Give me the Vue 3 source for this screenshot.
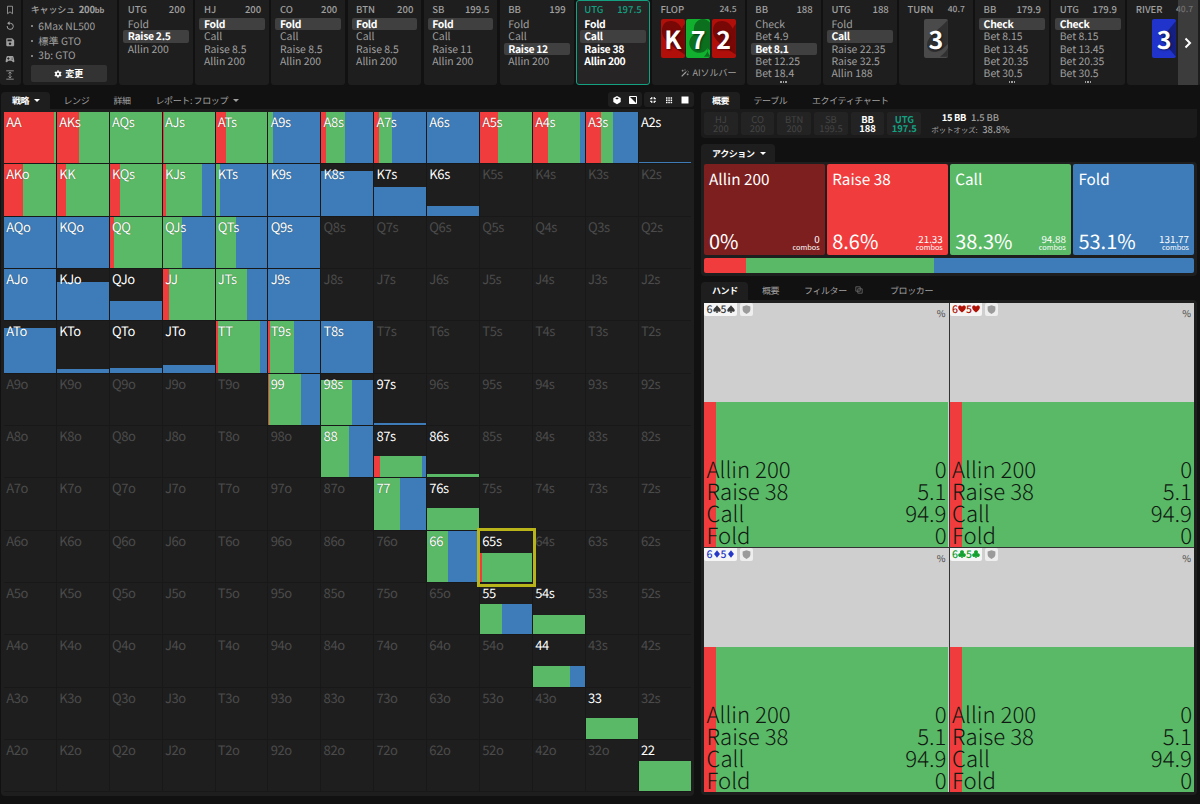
<template>
  <div class="app">

    <!-- Barra superior: historial de la mano -->
    <header class="topbar">
      <nav class="tools">
        <svg viewBox="0 0 12 12"><path d="M3 1.5h6v9L6 8.2 3 10.500z" fill="none" stroke="currentColor" /></svg>
        <svg viewBox="0 0 12 12"><path d="M4 2.700h2.500a3.700 3.700 0 1 1-3.900 3.300" fill="none" stroke="currentColor" stroke-width="1.200" /><path d="M5.500.3v4.800L2.600 2.700z" fill="currentColor" /></svg>
        <svg viewBox="0 0 12 12"><path fill-rule="evenodd" d="M2.500 1.500h6l2.500 2.500v6a1 1 0 0 1-1 1h-7.500a1 1 0 0 1-1-1v-7.500a1 1 0 0 1 1-1zM3 3v2h5V3zM6 6.500a1.500 1.500 0 1 0 .01 0z" fill="currentColor" /></svg>
        <svg viewBox="0 0 12 12"><path fill-rule="evenodd" d="M3 2.500h6c1.200 0 1.500 2 2.200 6 .2 1.500-1 1.800-1.700 1L7.800 8H4.200L2.500 9.500c-.7.800-1.900.5-1.700-1 .7-4 1-6 2.200-6zM3.500 4v1h-1v1h1v1h1V6h1V5h-1V4zM8 4.500v1h1v-1zM8 6v1h1V6z" fill="currentColor" /></svg>
        <svg viewBox="0 0 12 12"><path d="M1.500 1h9M1.500 11h9M6 2.500v7M4 4.300l2-2 2 2M4 7.700l2 2 2-2" fill="none" stroke="currentColor" /></svg>
      </nav>

      <section class="setup">
        <div class="setup-title">キャッシュ <b>200<small>bb</small></b></div>
        <ul>
          <li v-for="s in ajustes" :key="s">{{ s }}</li>
        </ul>
        <button class="btn-change">
          <svg viewBox="0 0 12 12"><circle cx="6" cy="6" r="3" fill="none" stroke="#fff" stroke-width="2.400" /><path d="M6 .5v11M1.200 3.200l9.600 5.600M10.800 3.200L1.200 8.800" stroke="#fff" stroke-width="2" /><circle cx="6" cy="6" r="1.700" fill="#353535" /></svg>
          変更
        </button>
      </section>

      <section v-for="(n, i) in nodos" :key="i" class="node" :class="{ active: n.activo, flop: n.pos === 'FLOP' }">
        <div class="node-head"><span>{{ n.pos }}</span><span :class="{ pot: n.cartas }">{{ n.stack }}</span></div>
        <template v-if="n.cartas">
          <div class="cards">
            <div v-for="c in n.cartas" :key="c.r" class="card" :class="c.palo">
              <svg viewBox="0 0 24 39"><path :d="palosGrandes[c.palo]" /></svg>
              <b>{{ c.r }}</b>
            </div>
          </div>
          <div v-if="n.pos === 'FLOP'" class="solver">
            <svg viewBox="0 0 12 12"><path d="M1 11l6.500-6.500" stroke="currentColor" stroke-width="1.800" /><path d="M8 4l1.500-1.500M2.500 1v3M1 2.500h3M6 .5v2M10 6.500v3M8.500 8h3M11 3.500v1.500" stroke="currentColor" stroke-width="1.100" fill="none" /></svg>
            AIソルバー
          </div>
        </template>
        <div v-else class="node-list">
          <div v-for="(a, j) in n.acciones" :key="a" class="act" :class="{ sel: j === n.sel }">{{ a }}</div>
          <div v-if="n.mas" class="more"><i /><i /><i /></div>
        </div>
      </section>

      <button class="scroll-right">
        <svg viewBox="0 0 10 14"><path d="M2.500 2.500L7 7l-4.500 4.500" fill="none" stroke="#fff" stroke-width="2" /></svg>
      </button>
    </header>

    <main class="content">

      <!-- Matriz de manos -->
      <section class="left">
        <div class="tabs">
          <span class="tab on w-strategy">戦略 <i class="caret" /></span>
          <span class="tab w-range">レンジ</span>
          <span class="tab w-detail">詳細</span>
          <span class="tab w-report">レポート: フロップ <i class="caret" /></span>
          <div class="views">
            <div class="view-group">
              <svg viewBox="0 0 10 10"><path d="M5 1l3.700 2v4L5 9.200 1.300 7V3z" fill="#fff" /><path d="M3.200 3.400L5 4.400l1.800-1L5 2.500z" fill="#1e1e1e" /></svg>
              <svg viewBox="0 0 10 10"><path d="M1.500 1.500h7v7h-7z" fill="none" stroke="#fff" /><path d="M1.500 1.500v7h7z" fill="#fff" /></svg>
            </div>
            <div class="view-group">
              <svg viewBox="0 0 10 10"><path d="M3.800 2v1.800H2M6.200 2v1.800H8M3.800 8V6.200H2M6.200 8V6.200H8" fill="none" stroke="#fff" stroke-width="1.100" /></svg>
              <svg viewBox="0 0 10 10"><path d="M2 3h6.500M2 5.250h6.500M2 7.500h6.500" stroke="#fff" stroke-width="1.500" stroke-dasharray="1.500 .8" /></svg>
              <svg viewBox="0 0 10 10"><path d="M1.500 1.500h7v7h-7z" fill="#fff" /></svg>
            </div>
          </div>
        </div>
        <div class="matrix-panel">
          <div class="matrix">
            <div v-for="c in celdas" :key="c.mano" class="cell" :class="{ empty: !c.barras, selected: c.mano === '65s' }">
              <div v-if="c.barras" class="fill" :style="{ height: c.alto + '%' }">
                <i v-for="(w, k) in c.barras" :key="k" :class="colores[k]" :style="{ width: w + '%' }" />
              </div>
              <span class="label">{{ c.mano }}</span>
            </div>
          </div>
        </div>
      </section>

      <!-- Resumen -->
      <section class="right">
        <div class="tabs">
          <span class="tab on w-sum">概要</span>
          <span class="tab w-table">テーブル</span>
          <span class="tab">エクイティチャート</span>
        </div>
        <div class="players">
          <div v-for="p in jugadores" :key="p.pos" class="player" :class="p.estado">
            <span>{{ p.pos }}</span><span>{{ p.stack }}</span>
          </div>
          <div class="pot-info">
            <div><b>15 BB</b><span>1.5 BB</span></div>
            <div class="odds"><small>ポットオッズ:</small><span>38.8%</span></div>
          </div>
        </div>

        <div class="tabs tabs-action">
          <span class="tab on w-action">アクション <i class="caret" /></span>
        </div>
        <div class="actions-panel">
          <div class="actions">
            <div v-for="a in acciones" :key="a.nombre" class="action" :class="a.color">
              <div class="action-name">{{ a.nombre }}</div>
              <div class="action-foot">
                <span class="pct">{{ a.pct }}%</span>
                <span class="combos">{{ a.combos }}<small>combos</small></span>
              </div>
            </div>
          </div>
          <div class="total-bar">
            <i v-for="a in acciones" :key="a.nombre" :class="a.color" :style="{ width: a.pct + '%' }" />
          </div>
        </div>

        <div class="tabs tabs-hand">
          <span class="tab on w-hand">ハンド</span>
          <span class="tab w-hsum">概要</span>
          <span class="tab w-filter">フィルター
            <svg viewBox="0 0 10 10"><path d="M1 1h5.500v5.500H1zM3.500 3.500H9V9H3.500z" fill="none" stroke="currentColor" stroke-width=".9" /></svg>
          </span>
          <span class="tab">ブロッカー</span>
        </div>
        <div class="hands-panel">
          <div class="hands">
            <div v-for="p in palos" :key="p" class="hand">
              <div class="hand-fill"><i class="red" :style="{ width: '5.1%' }" /><i class="green" :style="{ width: '94.9%' }" /></div>
              <div class="hand-body">
                <div class="hand-head">
                  <span class="combo" :class="p">
                    <template v-for="r in ['6', '5']" :key="r">{{ r }}<svg viewBox="0 0 10 10"><path :d="iconos[p]" fill="currentColor" /></svg></template>
                  </span>
                  <span class="shield"><svg viewBox="0 0 10 10"><path d="M5 .3l4.300 1.300v3.200C9.300 7.500 7.300 9 5 9.900 2.700 9 .7 7.500.7 4.800V1.600z" fill="#9b9b9b" /></svg></span>
                  <span class="percent">%</span>
                </div>
                <div class="hand-rows">
                  <div v-for="f in frecuencias" :key="f[0]"><span>{{ f[0] }}</span><span>{{ f[1] }}</span></div>
                </div>
              </div>
            </div>
          </div>
        </div>
      </section>
    </main>
  </div>
</template>

<script setup>
const ajustes = ['6Max NL500', '標準 GTO', '3b: GTO']

const nodos = [
  { pos: 'UTG',   stack: '200',   acciones: ['Fold', 'Raise 2.5', 'Allin 200'], sel: 1 },
  { pos: 'HJ',    stack: '200',   acciones: ['Fold', 'Call', 'Raise 8.5', 'Allin 200'], sel: 0 },
  { pos: 'CO',    stack: '200',   acciones: ['Fold', 'Call', 'Raise 8.5', 'Allin 200'], sel: 0 },
  { pos: 'BTN',   stack: '200',   acciones: ['Fold', 'Call', 'Raise 8.5', 'Allin 200'], sel: 0 },
  { pos: 'SB',    stack: '199.5', acciones: ['Fold', 'Call', 'Raise 11', 'Allin 200'], sel: 0 },
  { pos: 'BB',    stack: '199',   acciones: ['Fold', 'Call', 'Raise 12', 'Allin 200'], sel: 2 },
  { pos: 'UTG',   stack: '197.5', acciones: ['Fold', 'Call', 'Raise 38', 'Allin 200'], sel: 1, activo: true },
  { pos: 'FLOP',  stack: '24.5',  cartas: [{ r: 'K', palo: 'heart' }, { r: '7', palo: 'club' }, { r: '2', palo: 'heart' }] },
  { pos: 'BB',    stack: '188',   acciones: ['Check', 'Bet 4.9', 'Bet 8.1', 'Bet 12.25', 'Bet 18.4'], sel: 2, mas: true },
  { pos: 'UTG',   stack: '188',   acciones: ['Fold', 'Call', 'Raise 22.35', 'Raise 32.5', 'Allin 188'], sel: 1 },
  { pos: 'TURN',  stack: '40.7',  cartas: [{ r: '3', palo: 'spade' }] },
  { pos: 'BB',    stack: '179.9', acciones: ['Check', 'Bet 8.15', 'Bet 13.45', 'Bet 20.35', 'Bet 30.5'], sel: 0, mas: true },
  { pos: 'UTG',   stack: '179.9', acciones: ['Check', 'Bet 8.15', 'Bet 13.45', 'Bet 20.35', 'Bet 30.5'], sel: 0, mas: true },
  { pos: 'RIVER', stack: '40.7',  cartas: [{ r: '3', palo: 'diamond' }] },
]

// Fondo de cada carta, recortado por el borde
const palosGrandes = {
  heart:   'M24 36C15 29 1 23 1 12C1 5 5 2 10 2c6 0 9 4 11 8 1-3 2-4 3-5z',
  club:    'M8 9a9 9 0 0 1 17-4v27c-2-1-3-2-4-3 0 4 2 7 4 9h-7c3-3 4-6 4-9A10 10 0 1 1 9 15a9 9 0 0 1-1-6z',
  spade:   'M24 1C16 10 3 17 3 26c0 6 6 9 12 6 3-1 6-4 9-7zM24 29c-1 3-4 6-8 9h8z',
  diamond: 'M24 2L9 20l15 18z',
}

const iconos = {
  spade:   'M5 .2C3.800 2.500.3 4 .3 6.500c0 2 2.500 2.500 4 1.100L3.500 9.800h3l-.8-2.200c1.500 1.400 4 .9 4-1.100C9.700 4 6.200 2.500 5 .2z',
  heart:   'M5 9.500C3 7.200.2 5.500.2 3 .2.200 3.800-.2 5 2.300 6.200-.2 9.800.2 9.800 3c0 2.500-2.800 4.200-4.800 6.500z',
  diamond: 'M5 .2L8.700 5 5 9.800 1.300 5z',
  club:    'M5 .2a2.300 2.300 0 0 1 1.800 3.900 2.300 2.300 0 1 1-1.200 3.600l.9 2.100h-3l.9-2.100A2.300 2.300 0 1 1 3.200 4.100 2.300 2.300 0 0 1 5 .2z',
}
const palos = ['spade', 'heart', 'diamond', 'club']

const colores = ['red', 'green', 'blue']

// mano: [raise, call, fold, alto de la barra]
const rango = {
  AA: [95.5, 4.5, 0],    AKs: [43.5, 56.5, 0], AQs: [0, 100, 0],    AJs: [2, 98, 0],      ATs: [20, 80, 0],
  A9s: [0, 9.5, 90.5],   A8s: [10, 35.5, 54.5], A7s: [8.5, 26.5, 65], A6s: [0, 0, 100],   A5s: [35, 65, 0],
  A4s: [29, 61.5, 9.5],  A3s: [29, 23, 48],    A2s: [0, 0, 100, 3.5],
  AKo: [36.5, 63.5, 0],  KK: [18, 82, 0],      KQs: [19.5, 80.5, 0], KJs: [6.5, 68.5, 25], KTs: [0, 8.5, 91.5],
  K9s: [0, 0, 100],      K8s: [0, 0, 100, 88], K7s: [0, 0, 100, 55], K6s: [0, 0, 100, 18],
  AQo: [0, 0, 100],      KQo: [0, 0, 100],     QQ: [7.5, 92.5, 0],  QJs: [0, 37, 63],     QTs: [0, 39.5, 60.5], Q9s: [0, 0, 100],
  AJo: [0, 0, 100],      KJo: [0, 0, 100, 75], QJo: [0, 0, 100, 37], JJ: [13, 87, 0],     JTs: [0, 61, 39],     J9s: [0, 0, 100],
  ATo: [0, 0, 100, 88],  KTo: [0, 0, 100, 8],  QTo: [0, 0, 100, 10], JTo: [0, 0, 100, 15.5], TT: [5.5, 80.5, 14],
  T9s: [4, 46, 50],      T8s: [0, 0, 100],
  99: [2, 61, 37],       '98s': [0, 59, 41, 88], '97s': [0, 0, 100, 4.5],
  88: [0, 53, 47],       '87s': [11.5, 80.5, 8, 42], '86s': [0, 100, 0, 6.5],
  77: [0, 50, 50],       '76s': [0, 100, 0, 43],
  66: [0, 39.5, 60.5],   '65s': [4.5, 95.5, 0, 57.5],
  55: [0, 43, 57, 59],   '54s': [0, 100, 0, 38],
  44: [0, 72, 28, 41.5], 33: [0, 100, 0, 42],  22: [0, 100, 0, 59],
}

const cartas = 'AKQJT98765432'.split('')
const celdas = cartas.flatMap((f, i) => cartas.map((c, j) => {
  const mano = i === j ? f + f : i < j ? f + c + 's' : c + f + 'o'
  const d = rango[mano]
  return { mano, barras: d?.slice(0, 3), alto: d?.[3] ?? 100 }
}))

const jugadores = [
  { pos: 'HJ',  stack: '200' },
  { pos: 'CO',  stack: '200' },
  { pos: 'BTN', stack: '200' },
  { pos: 'SB',  stack: '199.5' },
  { pos: 'BB',  stack: '188',   estado: 'alive' },
  { pos: 'UTG', stack: '197.5', estado: 'turn' },
]

const acciones = [
  { nombre: 'Allin 200', pct: 0,    combos: '0',      color: 'darkred' },
  { nombre: 'Raise 38',  pct: 8.6,  combos: '21.33',  color: 'red' },
  { nombre: 'Call',      pct: 38.3, combos: '94.88',  color: 'green' },
  { nombre: 'Fold',      pct: 53.1, combos: '131.77', color: 'blue' },
]

const frecuencias = [['Allin 200', '0'], ['Raise 38', '5.1'], ['Call', '94.9'], ['Fold', '0']]
</script>

<style>
body { background: #111; overflow: hidden; }
</style>

<style scoped>
* { box-sizing: border-box; }
.app { width: 1200px; height: 804px; overflow: hidden; background: #111; color: #a0a0a0; font-family: "Noto Sans CJK JP", sans-serif; text-rendering: geometricPrecision; }
button { font-family: inherit; border: none; padding: 0; }
svg { display: block; flex-shrink: 0; }
i { display: block; font-style: normal; }

.red     { background: #f03c3c; }
.green   { background: #5ab966; }
.blue    { background: #3d7cb8; }
.darkred { background: #7d1f1f; }

/* Barra superior */
.topbar { position: relative; display: flex; gap: 2.300px; height: 85px; overflow: hidden; }
.tools  { width: 20.500px; flex-shrink: 0; background: #1e1e1e; border-radius: 0 0 3px 3px; display: flex; flex-direction: column; align-items: center; padding-top: 5px; gap: 6.200px; }
.tools svg { width: 10px; height: 10px; }
.setup  { width: 94.200px; flex-shrink: 0; background: #1e1e1e; border-radius: 0 0 3px 3px; padding: 2px 9px 0 8px; }
.setup-title { font-size: 9px; line-height: 15px; font-weight: 500; white-space: nowrap; letter-spacing: -.2px; }
.setup-title b { font-size: 9.500px; font-weight: 700; margin-left: 2px; }
.setup-title small { font-size: 7.500px; }
.setup ul { list-style: none; margin: 1px 0 0; padding: 0; }
.setup li { display: flex; align-items: center; gap: 5.500px; font-size: 10.200px; line-height: 14.700px; white-space: nowrap; }
.setup li::before { content: ''; width: 2px; height: 2px; border-radius: 50%; background: currentColor; }
.btn-change { display: flex; align-items: center; justify-content: center; gap: 3px; width: 76px; height: 17px; margin-top: 2px; background: #333; border-radius: 2px; color: #fff; font-size: 9px; font-weight: 700; }
.btn-change svg { width: 8px; height: 8px; }

.node { width: 73.800px; flex-shrink: 0; background: #1e1e1e; border-radius: 0 0 3px 3px; padding: 2px 4px 0; }
.node.flop { width: 92.600px; }
.node.active { border: 1px solid #13a182; border-radius: 3px; padding: 1px 3px 0; background: #262425; }
.node.active .node-head { color: #13a182; }
.node.active .act { color: #fff; font-weight: 700; letter-spacing: -.3px; }
.node-head { display: flex; justify-content: space-between; padding: 0 4px 0 4.500px; font-size: 9.500px; line-height: 15px; font-weight: 500; }
.node-head .pot { font-size: 8.500px; }
.node-list { margin-top: 1px; }
.act { height: 12.300px; padding: 0 4.500px; font-size: 10.400px; line-height: 12.300px; border-radius: 2px; white-space: nowrap; }
.act.sel { background: #404040; color: #fff; font-weight: 700; letter-spacing: -.3px; }
.more { display: flex; justify-content: center; gap: 1px; padding-top: 2px; }
.more i { width: 1.500px; height: 1.500px; background: #a0a0a0; }
.cards { display: flex; justify-content: center; gap: 1.500px; margin-top: 2px; }
.card { width: 23.900px; height: 39px; border-radius: 2px; overflow: hidden; display: grid; }
.card > * { grid-area: 1 / 1; }
.card b { color: #fff; font-size: 25px; line-height: 41px; text-align: center; text-shadow: 1px 1px 2px rgba(0,0,0,.5); z-index: 1; }
.card.heart   { background: #b10f0a; fill: #780806; }
.card.club    { background: #12b02f; fill: #0b6f1e; }
.card.spade   { background: #4a4a4a; fill: #303030; }
.card.diamond { background: #2034cb; fill: #141f80; }
.solver { display: flex; align-items: center; justify-content: flex-end; gap: 3px; padding-right: 4px; margin-top: 8px; font-size: 9px; line-height: 14px; }
.solver svg { width: 8px; height: 8px; }
.scroll-right { position: absolute; right: 2px; top: 0; width: 20px; height: 85px; background: rgba(80,80,80,.6); display: flex; align-items: center; justify-content: center; }
.scroll-right svg { width: 10px; height: 14px; }

/* Pestañas */
.content { display: flex; gap: 7px; padding: 7px 3px 0 1px; }
.tabs { display: flex; height: 17px; }
.tab  { display: flex; align-items: center; font-size: 9px; line-height: 17px; white-space: nowrap; letter-spacing: -.4px; }
.tab.on { background: #1e1e1e; color: #fff; font-weight: 700; border-radius: 4px 4px 0 0; padding-left: 11px; }
.caret { border: 3px solid transparent; border-top: 3.500px solid currentColor; border-bottom: 0; margin-left: 5px; }
.w-strategy { width: 48.500px; margin-right: 14px; }
.w-range { width: 50px; }
.w-detail { width: 42px; }
.w-sum { width: 38.500px; margin-right: 14px; }
.w-table { width: 58.500px; }
.w-action { width: 74px; }
.w-hand { width: 47px; margin-right: 14px; }
.w-hsum { width: 42px; }
.w-filter { width: 86px; gap: 8px; }
.w-filter svg { width: 8px; height: 8px; color: #777; }
.views { display: flex; gap: 2px; margin-left: auto; }
.view-group { display: flex; align-items: center; gap: 6px; height: 15px; padding: 0 4px; background: #1e1e1e; border-radius: 3px; }
.view-group svg { width: 10px; height: 10px; }

/* Matriz */
.left { width: 693px; flex-shrink: 0; }
.matrix-panel { height: 687px; background: #1e1e1e; padding: 3px; border-radius: 0 0 4px 4px; }
.matrix { display: grid; grid-template-columns: repeat(13, 1fr); grid-template-rows: repeat(13, 1fr); gap: 1px; width: 686.500px; height: 679.500px; background: #181818; }
.cell { display: grid; min-width: 0; min-height: 0; background: #1e1e1e; position: relative; }
.cell > * { grid-area: 1 / 1; }
.fill { display: flex; align-self: end; }
.label { font-size: 13px; line-height: 19.500px; letter-spacing: -.4px; padding-left: 2.300px; color: #fff; z-index: 1; text-shadow: 0 0 1px rgba(0,0,0,.5); }
.empty .label { color: #4b4b4b; text-shadow: none; }
.selected::after { content: ''; position: absolute; inset: -2.500px -4px -5px -3px; border: 3px solid #b8b41a; z-index: 2; }

/* Panel derecho */
.right { flex: 1; min-width: 0; }
.players { display: flex; gap: 3px; height: 29px; padding: 3px; background: #1b1b1b; border-radius: 0 0 4px 4px; }
.player { width: 33.700px; height: 23px; background: #232323; border-radius: 2px; color: #444; font-size: 9.400px; line-height: 9.300px; padding-top: 2.500px; text-align: center; display: flex; flex-direction: column; }
.player.alive { color: #fff; font-weight: 700; }
.player.turn { color: #13a182; font-weight: 700; }
.pot-info { display: flex; flex-direction: column; align-items: center; margin-left: 7px; font-size: 9.300px; line-height: 11.500px; font-weight: 500; }
.pot-info b { color: #fff; margin-right: 5px; letter-spacing: -.3px; }
.odds small { font-size: 7.700px; margin-right: 5px; font-weight: 400; letter-spacing: -.3px; }

.tabs-action { height: 18px; margin-top: 6px; }
.actions-panel { height: 114px; padding: 2px 3px; background: #1e1e1e; border-radius: 0 4px 4px 4px; }
.actions { display: grid; grid-template-columns: repeat(4, 1fr); gap: 2.500px; height: 91px; }
.action { display: flex; flex-direction: column; justify-content: space-between; padding: 3px 5px 1px; border-radius: 2px; color: #fff; }
.action-name { font-size: 15.300px; line-height: 24px; }
.action-foot { display: flex; justify-content: space-between; align-items: flex-end; }
.pct { font-size: 20px; line-height: 26px; }
.combos { font-size: 9.800px; line-height: 10px; text-align: right; padding-bottom: 1px; }
.combos small { display: block; font-size: 7.300px; line-height: 9px; }
.total-bar { display: flex; height: 15px; margin-top: 2.500px; border-radius: 2px; overflow: hidden; }

.tabs-hand { height: 18px; margin-top: 6px; }
.tabs-hand .tab { padding-bottom: 1.500px; }
.hands-panel { height: 495px; padding: 2.500px 3px 2px; background: #1e1e1e; border-radius: 0 4px 4px 4px; }
.hands { display: grid; grid-template-columns: 1fr 1fr; grid-template-rows: 1fr 1fr; gap: 1px; height: 489px; background: #333; border-radius: 2px; }
.hand { display: grid; background: #cfcfcf; min-height: 0; }
.hand > * { grid-area: 1 / 1; min-height: 0; }
.hand-fill { display: flex; height: 59.100%; align-self: end; }
.hand-body { display: flex; flex-direction: column; justify-content: space-between; }
.hand-head { display: flex; align-items: flex-start; gap: 3px; }
.combo { display: flex; align-items: center; gap: 0; height: 13.500px; width: 32.500px; padding-left: 2.500px; background: #f5f5f5; border-radius: 0 0 2px 2px; font-size: 10.500px; font-weight: 500; }
.combo svg { width: 8px; height: 8px; }
.combo.spade   { color: #3b3b3b; }
.combo.heart   { color: #b01005; }
.combo.diamond { color: #2437c9; }
.combo.club    { color: #12a02e; }
.shield { display: flex; align-items: center; justify-content: center; width: 13px; height: 13.500px; background: #eee; border-radius: 2px; }
.shield svg { width: 9px; height: 9px; }
.percent { margin-left: auto; padding: 4px 3px 0 0; font-size: 9.500px; line-height: 13px; color: #444; }
.hand-rows { font-size: 22.200px; line-height: 22.100px; font-weight: 300; color: #101a12; padding: 0 2px 0 2.500px; margin-bottom: .3px; }
.hand-rows div { display: flex; justify-content: space-between; }
</style>
